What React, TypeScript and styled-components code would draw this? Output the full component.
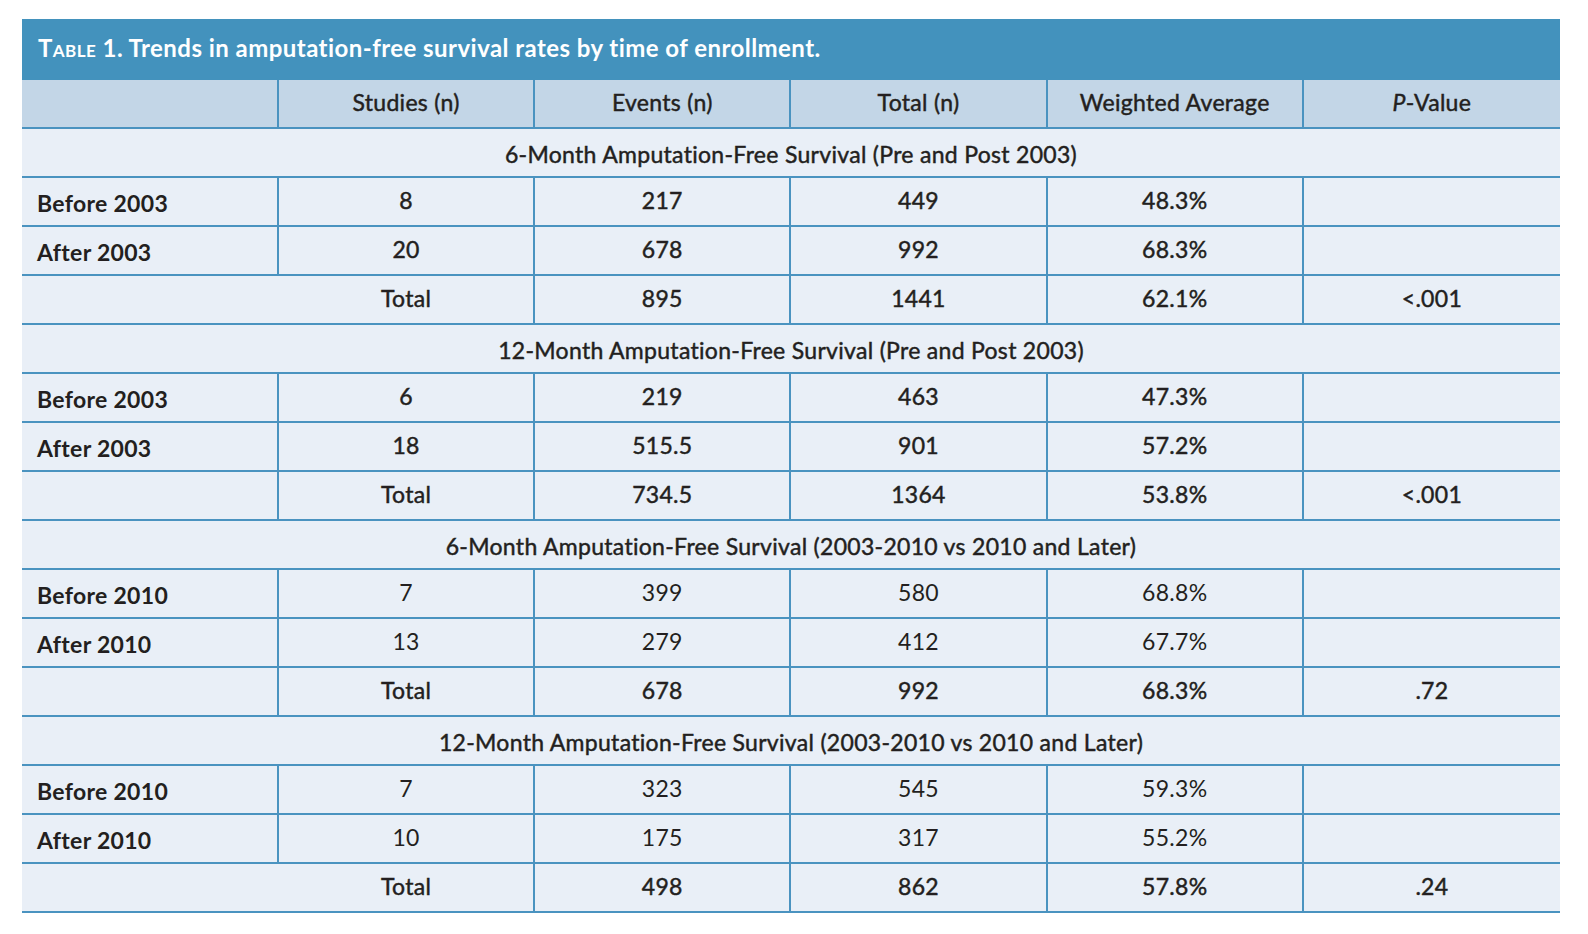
import styled, { createGlobalStyle, css } from "styled-components";

const GlobalStyle = createGlobalStyle`
  body {
    margin: 0;
    background: #fff;
    font-family: Lato, "Open Sans", sans-serif;
    color: #231f20;
  }
`;

const border = "2px solid #4a93c0";

// Lato has no medium cut here, so a thin stroke stands in for it
const medium = css`
  font-weight: 400;
  -webkit-text-stroke: 0.45px currentColor;
`;

const Page = styled.div`
  padding: 19px 28px 20px 22px;
`;

const Table = styled.div`
  width: 1538px;
  background: #e9eff7;
`;

const TitleBar = styled.div`
  height: 61px;
  box-sizing: border-box;
  padding: 0 16px 4px;
  display: flex;
  align-items: center;
  background: #4392bd;
  color: #fff;
  font-size: 24px;
  font-weight: 700;
  letter-spacing: 0.45px;
`;

const SmallCaps = styled.span`
  font-variant: small-caps;
`;

const Row = styled.div<{ $head?: boolean }>`
  display: grid;
  grid-template-columns: 257px repeat(5, 1fr);
  height: 49px;
  box-sizing: border-box;
  border-bottom: ${border};
  background: ${(p) => (p.$head ? "#c3d6e7" : "#e9eff7")};
`;

const Cell = styled.div<{ $weight?: "regular" | "medium" | "bold"; $divider?: boolean; $label?: boolean }>`
  display: flex;
  align-items: center;
  justify-content: ${(p) => (p.$label ? "flex-start" : "center")};
  padding: ${(p) => (p.$label ? "3px 0 0 15px" : "0 0 3px")};
  font-size: 23px;
  letter-spacing: 0.3px;
  font-weight: ${(p) => (p.$weight === "bold" ? 700 : 400)};
  ${(p) => p.$weight === "medium" && medium}
  border-right: ${(p) => (p.$divider ? border : "none")};
  white-space: nowrap;
`;

const GroupRow = styled.div`
  height: 49px;
  box-sizing: border-box;
  border-bottom: ${border};
  display: flex;
  align-items: center;
  justify-content: center;
  padding-top: 2px;
  font-size: 23px;
  letter-spacing: 0.3px;
  ${medium}
`;

type Group = {
  title: string;
  rows: { label: string; values: string[] }[];
  total: string[];
  strong: boolean;
  splitTotal: boolean;
};

const groups: Group[] = [
  {
    title: "6-Month Amputation-Free Survival (Pre and Post 2003)",
    rows: [
      { label: "Before 2003", values: ["8", "217", "449", "48.3%"] },
      { label: "After 2003", values: ["20", "678", "992", "68.3%"] },
    ],
    total: ["895", "1441", "62.1%", "<.001"],
    strong: true,
    splitTotal: false,
  },
  {
    title: "12-Month Amputation-Free Survival (Pre and Post 2003)",
    rows: [
      { label: "Before 2003", values: ["6", "219", "463", "47.3%"] },
      { label: "After 2003", values: ["18", "515.5", "901", "57.2%"] },
    ],
    total: ["734.5", "1364", "53.8%", "<.001"],
    strong: true,
    splitTotal: true,
  },
  {
    title: "6-Month Amputation-Free Survival (2003-2010 vs 2010 and Later)",
    rows: [
      { label: "Before 2010", values: ["7", "399", "580", "68.8%"] },
      { label: "After 2010", values: ["13", "279", "412", "67.7%"] },
    ],
    total: ["678", "992", "68.3%", ".72"],
    strong: false,
    splitTotal: true,
  },
  {
    title: "12-Month Amputation-Free Survival (2003-2010 vs 2010 and Later)",
    rows: [
      { label: "Before 2010", values: ["7", "323", "545", "59.3%"] },
      { label: "After 2010", values: ["10", "175", "317", "55.2%"] },
    ],
    total: ["498", "862", "57.8%", ".24"],
    strong: false,
    splitTotal: false,
  },
];

const App = () => {
  return (
    <>
      <GlobalStyle />
      <Page>
        <Table>
          <TitleBar>
            <span>
              <SmallCaps>Table</SmallCaps> 1. Trends in amputation-free
              survival rates by time of enrollment.
            </span>
          </TitleBar>
          <Row $head>
            <Cell $divider />
            <Cell $divider $weight="medium">Studies (n)</Cell>
            <Cell $divider $weight="medium">Events (n)</Cell>
            <Cell $divider $weight="medium">Total (n)</Cell>
            <Cell $divider $weight="medium">Weighted Average</Cell>
            <Cell $weight="medium">
              <i>P</i>-Value
            </Cell>
          </Row>
          {groups.map((g) => (
            <div key={g.title}>
              <GroupRow>{g.title}</GroupRow>
              {g.rows.map((r) => (
                <Row key={r.label}>
                  <Cell $label $divider $weight="bold">
                    {r.label}
                  </Cell>
                  {r.values.map((v, i) => (
                    <Cell key={i} $divider $weight={g.strong ? "medium" : "regular"}>
                      {v}
                    </Cell>
                  ))}
                  <Cell />
                </Row>
              ))}
              <Row>
                <Cell $divider={g.splitTotal} />
                <Cell $divider $weight="medium">Total</Cell>
                {g.total.map((v, i) => (
                  <Cell key={i} $divider={i < 3} $weight="medium">
                    {v}
                  </Cell>
                ))}
              </Row>
            </div>
          ))}
        </Table>
      </Page>
    </>
  );
};

export default App;
